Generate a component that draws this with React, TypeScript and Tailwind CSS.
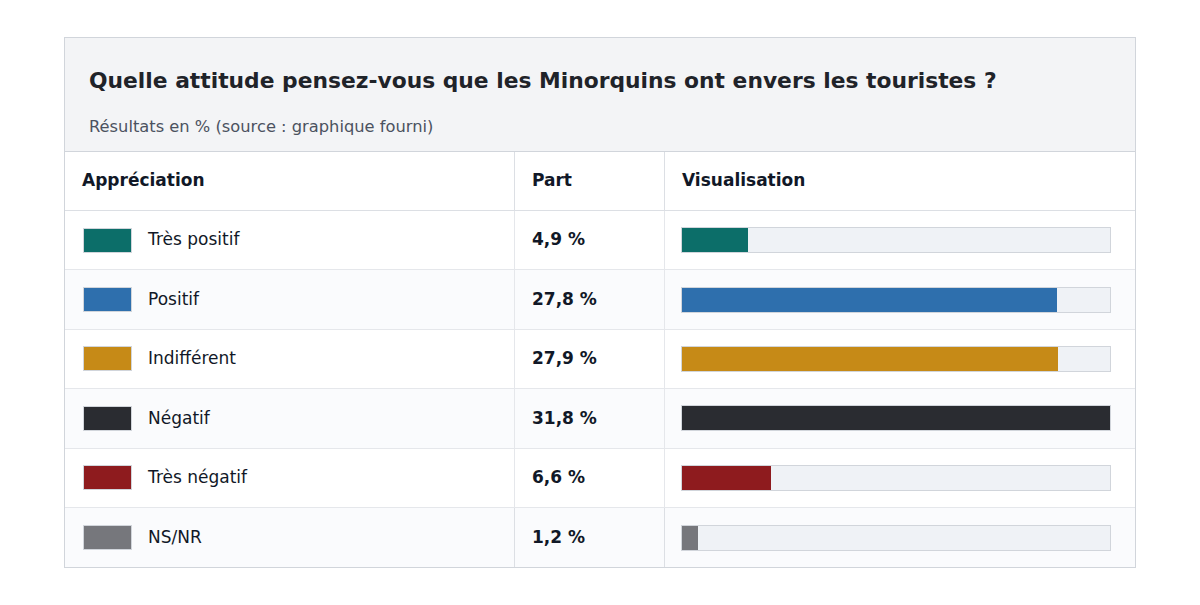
import React from "react";

const rows = [
  { label: "Très positif", value: 4.9, color: "#0c6e69" },
  { label: "Positif", value: 27.8, color: "#2e6fad" },
  { label: "Indifférent", value: 27.9, color: "#c68a17" },
  { label: "Négatif", value: 31.8, color: "#2a2c31" },
  { label: "Très négatif", value: 6.6, color: "#8e1b1e" },
  { label: "NS/NR", value: 1.2, color: "#76777c" },
];

const MAX = 31.8;
const BAR_W = 429;

export default function App() {
  return (
    <div
      className="w-[1200px] h-[605px] bg-white pt-[37px] pl-[64px]"
      style={{ fontFamily: '"DejaVu Sans", sans-serif' }}
    >
      <div className="w-[1072px] border border-[#d1d5db] bg-white">
        <div className="bg-[#f3f4f6] border-b border-[#d1d5db] pl-[24px] pt-[29px] h-[114px]">
          <div className="text-[21.8px] leading-[28px] font-bold text-[#1f2329]">
            Quelle attitude pensez-vous que les Minorquins ont envers les touristes ?
          </div>
          <div className="mt-[20px] text-[16.3px] leading-[24px] text-[#4b5260]">
            Résultats en % (source : graphique fourni)
          </div>
        </div>
        <div className="grid grid-cols-[450px_150px_1fr]">
          <div className="h-[59px] flex items-center pl-[17px] border-r border-b border-[#dcdfe4] font-bold text-[17px] text-[#111827]">
            Appréciation
          </div>
          <div className="h-[59px] flex items-center pl-[17px] border-r border-b border-[#dcdfe4] font-bold text-[17px] text-[#111827]">
            Part
          </div>
          <div className="h-[59px] flex items-center pl-[17px] border-b border-[#dcdfe4] font-bold text-[17px] text-[#111827]">
            Visualisation
          </div>
          {rows.map((r, i) => {
            const bg = i % 2 === 1 ? "bg-[#fafbfd]" : "bg-white";
            const last = i === rows.length - 1;
            const bb = last ? "" : "border-b border-[#e5e7eb]";
            return (
              <React.Fragment key={r.label}>
                <div
                  className={`h-[59.4px] flex items-center pl-[18px] border-r border-[#dcdfe4] ${bb} ${bg}`}
                >
                  <span
                    className="w-[49px] h-[25px] border border-[#d1d5db] shrink-0"
                    style={{ backgroundColor: r.color }}
                  />
                  <span className="ml-[16px] text-[17px] text-[#111827]">{r.label}</span>
                </div>
                <div
                  className={`h-[59.4px] flex items-center pl-[17px] border-r border-[#dcdfe4] ${bb} ${bg} font-bold text-[17px] text-[#111827]`}
                >
                  {r.value.toString().replace(".", ",")} %
                </div>
                <div className={`h-[59.4px] flex items-center pl-[16px] ${bb} ${bg}`}>
                  <div className="w-[430px] h-[26px] bg-[#eff2f6] border border-[#d1d5db] flex">
                    <div
                      className="h-full"
                      style={{
                        width: `${Math.round((r.value / MAX) * BAR_W)}px`,
                        backgroundColor: r.color,
                      }}
                    />
                  </div>
                </div>
              </React.Fragment>
            );
          })}
        </div>
      </div>
    </div>
  );
}
